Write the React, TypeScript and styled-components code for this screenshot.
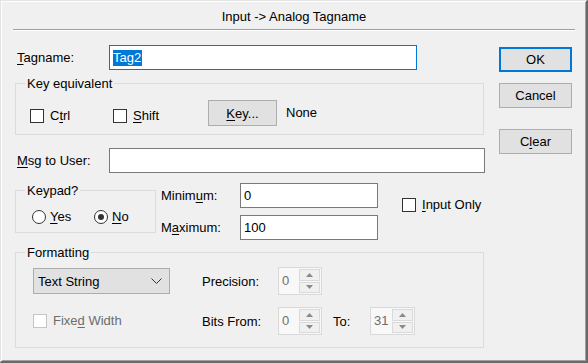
import React from "react";
import styled, { createGlobalStyle } from "styled-components";

const GlobalStyle = createGlobalStyle`
  html, body { margin: 0; padding: 0; background: #f0f0f0; }
  * { box-sizing: border-box; }
`;

const Window = styled.div`
  width: 588px;
  height: 363px;
  background: #f0f0f0;
  border-top: 1px solid #e3e3e3;
  border-left: 1px solid #e3e3e3;
  border-right: 2px solid #696969;
  border-bottom: 2px solid #696969;
  box-shadow: inset 1px 1px 0 #ffffff, inset -1px -1px 0 #a0a0a0;
  font-family: "Liberation Sans", Arial, sans-serif;
  font-size: 13px;
  color: #000;
  display: flex;
  flex-direction: column;
`;

const TitleBar = styled.div`
  height: 29px;
  margin: 0 11px 0 12px;
  padding-top: 2px;
  border-bottom: 1px solid #a0a0a0;
  box-shadow: 0 1px 0 #ffffff;
  display: flex;
  align-items: center;
  justify-content: center;
  font-size: 13px;
`;

const Body = styled.div`
  display: flex;
  padding: 15px 0 0 14px;
`;

const LeftCol = styled.div`
  width: 470px;
  display: flex;
  flex-direction: column;
`;

const RightCol = styled.div`
  margin-left: 14px;
  padding-top: 2px;
  display: flex;
  flex-direction: column;
`;

const DlgButton = styled.div<{ $default?: boolean; $mt?: number; $w?: number; $h?: number }>`
  width: ${(p) => p.$w ?? 73}px;
  height: ${(p) => p.$h ?? 25}px;
  margin-top: ${(p) => p.$mt ?? 0}px;
  background: #e1e1e1;
  border: 1px solid ${(p) => (p.$default ? "#0078d7" : "#adadad")};
  box-shadow: ${(p) => (p.$default ? "inset 0 0 0 1px #0078d7" : "none")};
  display: flex;
  align-items: center;
  justify-content: center;
  flex-shrink: 0;
`;

const U = styled.span`
  text-decoration: underline;
  text-underline-offset: 2px;
`;

const FieldRow = styled.div<{ $mt?: number }>`
  display: flex;
  align-items: center;
  height: 25px;
  margin-top: ${(p) => p.$mt ?? 0}px;
`;

const FieldLabel = styled.div<{ $w?: number; $pl?: number }>`
  width: ${(p) => p.$w ?? 94}px;
  padding-left: ${(p) => p.$pl ?? 2}px;
  white-space: nowrap;
`;

const TextBox = styled.div<{ $w: number; $focus?: boolean }>`
  width: ${(p) => p.$w}px;
  height: 25px;
  background: #ffffff;
  border: 1px solid ${(p) => (p.$focus ? "#0078d7" : "#7a7a7a")};
  display: flex;
  align-items: center;
  padding-left: 3px;
  white-space: nowrap;
`;

const Selected = styled.span`
  background: #0078d7;
  color: #ffffff;
  line-height: 16px;
  padding: 0 1px 0 0;
`;

const GroupBox = styled.div<{ $w: number; $h: number; $mt?: number }>`
  position: relative;
  width: ${(p) => p.$w}px;
  height: ${(p) => p.$h}px;
  margin-top: ${(p) => p.$mt ?? 0}px;
  border: 1px solid #dcdcdc;
  flex-shrink: 0;
`;

const GroupTitle = styled.span`
  position: absolute;
  top: -8px;
  left: 9px;
  padding: 0 2px;
  background: #f0f0f0;
  line-height: 15px;
  white-space: nowrap;
`;

const KeyRow = styled.div`
  display: flex;
  align-items: flex-start;
  padding: 16px 0 0 14px;
`;

const CheckItem = styled.div<{ $w?: number; $mt?: number; $ml?: number; $disabled?: boolean }>`
  display: flex;
  align-items: center;
  gap: 6px;
  height: 15px;
  width: ${(p) => (p.$w ? `${p.$w}px` : "auto")};
  margin-top: ${(p) => p.$mt ?? 0}px;
  margin-left: ${(p) => p.$ml ?? 0}px;
  color: ${(p) => (p.$disabled ? "#6d6d6d" : "#000")};
  white-space: nowrap;
  flex-shrink: 0;
`;

const CheckBox = styled.span<{ $disabled?: boolean }>`
  width: 14px;
  height: 14px;
  background: #ffffff;
  border: 1px solid ${(p) => (p.$disabled ? "#c5c5c5" : "#333333")};
  flex-shrink: 0;
`;

const NoneText = styled.div`
  line-height: 26px;
  margin-left: 9px;
`;

const KeypadRow = styled.div`
  display: flex;
  align-items: flex-start;
  margin-top: 10px;
`;

const RadioRow = styled.div`
  display: flex;
  padding: 18px 0 0 16px;
`;

const RadioItem = styled.div<{ $w?: number }>`
  display: flex;
  align-items: center;
  gap: 4px;
  height: 15px;
  width: ${(p) => (p.$w ? `${p.$w}px` : "auto")};
`;

const Radio = styled.span<{ $on?: boolean }>`
  width: 14px;
  height: 14px;
  border-radius: 50%;
  border: 1px solid #333333;
  background: #ffffff;
  display: flex;
  align-items: center;
  justify-content: center;
  flex-shrink: 0;
  &::after {
    content: "";
    width: 6px;
    height: 6px;
    border-radius: 50%;
    background: ${(p) => (p.$on ? "#333333" : "transparent")};
  }
`;

const RangeGrid = styled.div`
  display: grid;
  grid-template-columns: 79px 138px;
  grid-auto-rows: 25px;
  row-gap: 7px;
  align-items: center;
  margin-left: 5px;
`;

const FormatInner = styled.div`
  display: flex;
  align-items: flex-start;
  padding: 15px 0 0 17px;
`;

const FormatLeft = styled.div`
  display: flex;
  flex-direction: column;
`;

const Dropdown = styled.div`
  width: 137px;
  height: 26px;
  background: #e1e1e1;
  border: 1px solid #adadad;
  display: flex;
  align-items: center;
  padding: 0 7px 0 4px;
  justify-content: space-between;
`;

const SpinGrid = styled.div`
  display: grid;
  grid-template-columns: 76px 44px 48px 45px;
  grid-auto-rows: 28px;
  row-gap: 12px;
  align-items: center;
  margin: -1px 0 0 32px;
`;

const SpinLabel = styled.div<{ $pl?: number }>`
  padding-left: ${(p) => p.$pl ?? 0}px;
  white-space: nowrap;
`;

const Spin = styled.div<{ $w: number }>`
  width: ${(p) => p.$w}px;
  height: 28px;
  border: 1px solid #d9d9d9;
  background: #f8f8f8;
  display: flex;
`;

const SpinValue = styled.div`
  flex: 1;
  color: #6d6d6d;
  padding: 5px 0 0 3px;
`;

const SpinButtons = styled.div`
  width: 22px;
  display: flex;
  flex-direction: column;
  gap: 1px;
  padding: 1px 1px 1px 0;
`;

const SpinBtn = styled.div`
  flex: 1;
  background: #f0f0f0;
  border: 1px solid #dadada;
  display: flex;
  align-items: center;
  justify-content: center;
`;

const Arrow = ({ up }: { up?: boolean }) => (
  <svg width="7" height="4" viewBox="0 0 7 4">
    <polygon points={up ? "0,4 7,4 3.5,0" : "0,0 7,0 3.5,4"} fill="#8a8a8a" />
  </svg>
);

const Chevron = () => (
  <svg width="11" height="6" viewBox="0 0 11 6">
    <polyline points="0.5,0.5 5.5,5.5 10.5,0.5" fill="none" stroke="#333" strokeWidth="1" />
  </svg>
);

const SpinBox = ({ w, value }: { w: number; value: string }) => (
  <Spin $w={w}>
    <SpinValue>{value}</SpinValue>
    <SpinButtons>
      <SpinBtn>
        <Arrow up />
      </SpinBtn>
      <SpinBtn>
        <Arrow />
      </SpinBtn>
    </SpinButtons>
  </Spin>
);

export default function App() {
  return (
    <>
      <GlobalStyle />
      <Window>
        <TitleBar>Input -&gt; Analog Tagname</TitleBar>
        <Body>
          <LeftCol>
            <FieldRow>
              <FieldLabel>
                <U>T</U>agname:
              </FieldLabel>
              <TextBox $w={308} $focus>
                <Selected>Tag2</Selected>
              </TextBox>
            </FieldRow>

            <GroupBox $w={469} $h={52} $mt={13}>
              <GroupTitle>Key equivalent</GroupTitle>
              <KeyRow>
                <CheckItem $w={83} $mt={8}>
                  <CheckBox />
                  <span>
                    C<U>t</U>rl
                  </span>
                </CheckItem>
                <CheckItem $w={95} $mt={8}>
                  <CheckBox />
                  <span>
                    <U>S</U>hift
                  </span>
                </CheckItem>
                <DlgButton $w={69} $h={26}>
                  <span>
                    <U>K</U>ey...
                  </span>
                </DlgButton>
                <NoneText>None</NoneText>
              </KeyRow>
            </GroupBox>

            <FieldRow $mt={13}>
              <FieldLabel>
                <U>M</U>sg to User:
              </FieldLabel>
              <TextBox $w={376} />
            </FieldRow>

            <KeypadRow>
              <GroupBox $w={141} $h={43} $mt={7}>
                <GroupTitle>Keypad?</GroupTitle>
                <RadioRow>
                  <RadioItem $w={62}>
                    <Radio />
                    <span>
                      <U>Y</U>es
                    </span>
                  </RadioItem>
                  <RadioItem>
                    <Radio $on />
                    <span>
                      <U>N</U>o
                    </span>
                  </RadioItem>
                </RadioRow>
              </GroupBox>
              <RangeGrid>
                <FieldLabel $w={79} $pl={0}>
                  Minim<U>u</U>m:
                </FieldLabel>
                <TextBox $w={138}>0</TextBox>
                <FieldLabel $w={79} $pl={0}>
                  M<U>a</U>ximum:
                </FieldLabel>
                <TextBox $w={138}>100</TextBox>
              </RangeGrid>
              <CheckItem $mt={14} $ml={24}>
                <CheckBox />
                <span>
                  <U>I</U>nput Only
                </span>
              </CheckItem>
            </KeypadRow>

            <GroupBox $w={469} $h={96} $mt={12}>
              <GroupTitle>Formatting</GroupTitle>
              <FormatInner>
                <FormatLeft>
                  <Dropdown>
                    <span>Text String</span>
                    <Chevron />
                  </Dropdown>
                  <CheckItem $mt={19} $disabled>
                    <CheckBox $disabled />
                    <span>
                      Fixe<U>d</U> Width
                    </span>
                  </CheckItem>
                </FormatLeft>
                <SpinGrid>
                  <SpinLabel>Precision:</SpinLabel>
                  <SpinBox w={44} value="0" />
                  <span />
                  <span />
                  <SpinLabel>Bits From:</SpinLabel>
                  <SpinBox w={44} value="0" />
                  <SpinLabel $pl={11}>To:</SpinLabel>
                  <SpinBox w={45} value="31" />
                </SpinGrid>
              </FormatInner>
            </GroupBox>
          </LeftCol>

          <RightCol>
            <DlgButton $default>OK</DlgButton>
            <DlgButton $mt={11}>Cancel</DlgButton>
            <DlgButton $mt={21}>
              <span>
                C<U>l</U>ear
              </span>
            </DlgButton>
          </RightCol>
        </Body>
      </Window>
    </>
  );
}
